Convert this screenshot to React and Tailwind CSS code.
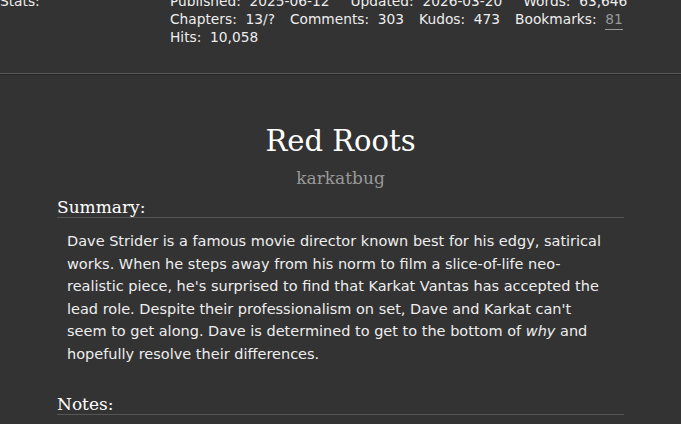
export default function App() {
  const sans = { fontFamily: '"DejaVu Sans", sans-serif' };
  const serif = { fontFamily: '"DejaVu Serif", serif' };
  return (
    <div className="w-[681px] h-[424px] overflow-hidden bg-[#333333] text-[#eeeeee]" style={sans}>
      <div className="h-[74px] border-b border-[#5a5a5a] shadow-[0_1px_0_#262626] overflow-hidden">
        <div className="-mt-[8px] flex text-[13.75px] leading-[18px]">
          <div className="w-[170px] shrink-0">Stats:</div>
          <div className="flex flex-col">
            <div className="flex gap-[21px] whitespace-pre">
              <span>Published:  2025-06-12</span>
              <span>Updated:  2026-03-20</span>
              <span>Words:  63,646</span>
            </div>
            <div className="flex gap-[15px] whitespace-pre">
              <span>Chapters:  13/?</span>
              <span>Comments:  303</span>
              <span>Kudos:  473</span>
              <span>
                Bookmarks:  <span className="text-[#999999] border-b border-[#999999] pb-[2px]">81</span>
              </span>
            </div>
            <div className="whitespace-pre">Hits:  10,058</div>
          </div>
        </div>
      </div>
      <div className="px-[57px] pt-[49px]">
        <h2 className="text-center text-[29px] leading-[36px] text-white" style={serif}>Red Roots</h2>
        <div className="text-center text-[17px] leading-[22px] mt-[8px] text-[#999999]" style={serif}>karkatbug</div>
        <h3 className="mt-[9px] text-[17px] leading-[19px] text-white border-b border-[#555555]" style={serif}>Summary:</h3>
        <div className="pl-[10px] pr-[10px] mt-[12px] text-[14.5px] leading-[22.6px]">
          Dave Strider is a famous movie director known best for his edgy, satirical works. When he steps away from his norm to film a slice-of-life neo-realistic piece, he's surprised to find that Karkat Vantas has accepted the lead role. Despite their professionalism on set, Dave and Karkat can't seem to get along. Dave is determined to get to the bottom of <i>why</i> and hopefully resolve their differences.
        </div>
        <h3 className="mt-[29px] text-[17px] leading-[19px] text-white border-b border-[#555555]" style={serif}>Notes:</h3>
      </div>
    </div>
  );
}
